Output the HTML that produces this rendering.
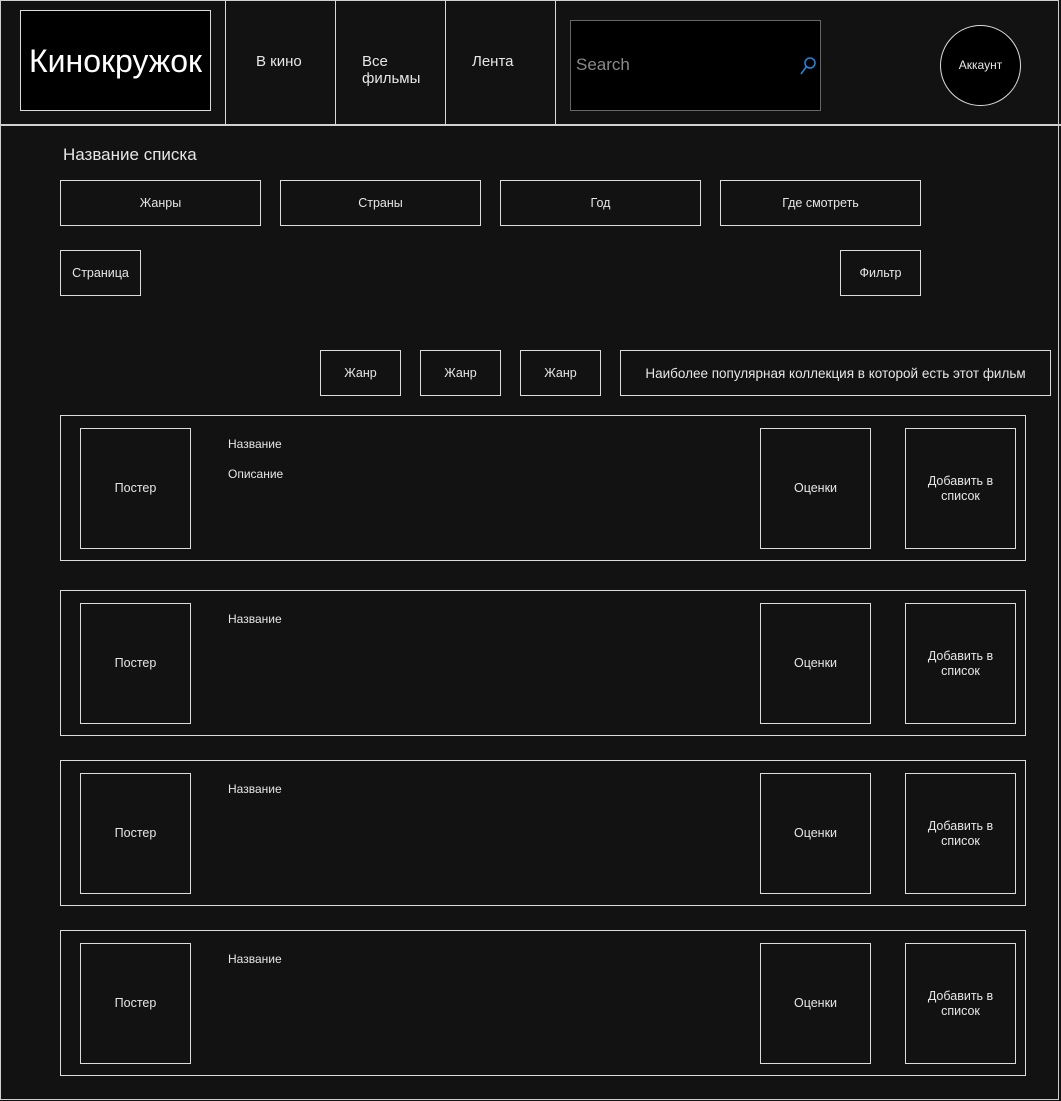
<!DOCTYPE html>
<html><head><meta charset="utf-8"><style>
*{box-sizing:border-box;margin:0;padding:0}
body{width:1061px;height:1101px;background:#121212;position:relative;overflow:hidden;font-family:"Liberation Sans","DejaVu Sans",sans-serif;color:#e6e6e6}
.b{position:absolute;border:1px solid #dcdcdc;display:flex;align-items:center;justify-content:center;text-align:center;font-size:12.5px;line-height:15px}
.t{position:absolute;font-size:12px;white-space:nowrap}
.v{position:absolute;top:0;width:1px;height:125px;background:#d8d8d8}
</style></head><body>
<div class="b" style="left:0;top:0;width:1059px;height:1100px;border-color:#cfcfcf"></div>
<div style="position:absolute;left:0;top:124px;width:1061px;height:2px;background:#d0d0d0"></div>
<div class="b" style="left:20px;top:10px;width:191px;height:101px;background:#000;font-size:32px;color:#fff;padding-top:1px">Кинокружок</div>
<div class="v" style="left:225px"></div><div class="v" style="left:335px"></div><div class="v" style="left:445px"></div><div class="v" style="left:555px"></div>
<div class="t" style="left:256px;top:53px;font-size:15px">В кино</div>
<div class="t" style="left:362px;top:53px;font-size:15px;line-height:17px">Все<br>фильмы</div>
<div class="t" style="left:472px;top:53px;font-size:15px">Лента</div>
<div style="position:absolute;left:570px;top:20px;width:251px;height:91px;background:#000;border:1px solid #666"></div>
<div class="t" style="left:576px;top:55px;font-size:17px;color:#8a8a8a">Search</div>
<svg style="position:absolute;left:799px;top:55px" width="20" height="22"><circle cx="11" cy="8" r="5" fill="none" stroke="#1e88e5" stroke-width="1.5"/><line x1="7.5" y1="11.5" x2="2" y2="19" stroke="#1e88e5" stroke-width="1.5"/></svg>
<div class="b" style="left:940px;top:25px;width:81px;height:81px;border-radius:50%;background:#000;font-size:12px">Аккаунт</div>
<div class="t" style="left:63px;top:145px;font-size:17px">Название списка</div>
<div class="b" style="left:60px;top:180px;width:201px;height:46px">Жанры</div>
<div class="b" style="left:280px;top:180px;width:201px;height:46px">Страны</div>
<div class="b" style="left:500px;top:180px;width:201px;height:46px">Год</div>
<div class="b" style="left:720px;top:180px;width:201px;height:46px">Где смотреть</div>
<div class="b" style="left:60px;top:250px;width:81px;height:46px">Страница</div>
<div class="b" style="left:840px;top:250px;width:81px;height:46px">Фильтр</div>
<div class="b" style="left:320px;top:350px;width:81px;height:46px">Жанр</div>
<div class="b" style="left:420px;top:350px;width:81px;height:46px">Жанр</div>
<div class="b" style="left:520px;top:350px;width:81px;height:46px">Жанр</div>
<div class="b" style="left:620px;top:350px;width:431px;height:46px;font-size:13.5px">Наиболее популярная коллекция в которой есть этот фильм</div>

<div class="b" style="left:60px;top:415px;width:966px;height:146px"></div>
<div class="b" style="left:80px;top:428px;width:111px;height:121px">Постер</div>
<div class="t" style="left:228px;top:437px">Название</div>
<div class="t" style="left:228px;top:467px">Описание</div>
<div class="b" style="left:760px;top:428px;width:111px;height:121px">Оценки</div>
<div class="b" style="left:905px;top:428px;width:111px;height:121px">Добавить в<br>список</div>

<div class="b" style="left:60px;top:590px;width:966px;height:146px"></div>
<div class="b" style="left:80px;top:603px;width:111px;height:121px">Постер</div>
<div class="t" style="left:228px;top:612px">Название</div>
<div class="b" style="left:760px;top:603px;width:111px;height:121px">Оценки</div>
<div class="b" style="left:905px;top:603px;width:111px;height:121px">Добавить в<br>список</div>

<div class="b" style="left:60px;top:760px;width:966px;height:146px"></div>
<div class="b" style="left:80px;top:773px;width:111px;height:121px">Постер</div>
<div class="t" style="left:228px;top:782px">Название</div>
<div class="b" style="left:760px;top:773px;width:111px;height:121px">Оценки</div>
<div class="b" style="left:905px;top:773px;width:111px;height:121px">Добавить в<br>список</div>

<div class="b" style="left:60px;top:930px;width:966px;height:146px"></div>
<div class="b" style="left:80px;top:943px;width:111px;height:121px">Постер</div>
<div class="t" style="left:228px;top:952px">Название</div>
<div class="b" style="left:760px;top:943px;width:111px;height:121px">Оценки</div>
<div class="b" style="left:905px;top:943px;width:111px;height:121px">Добавить в<br>список</div>
</body></html>
